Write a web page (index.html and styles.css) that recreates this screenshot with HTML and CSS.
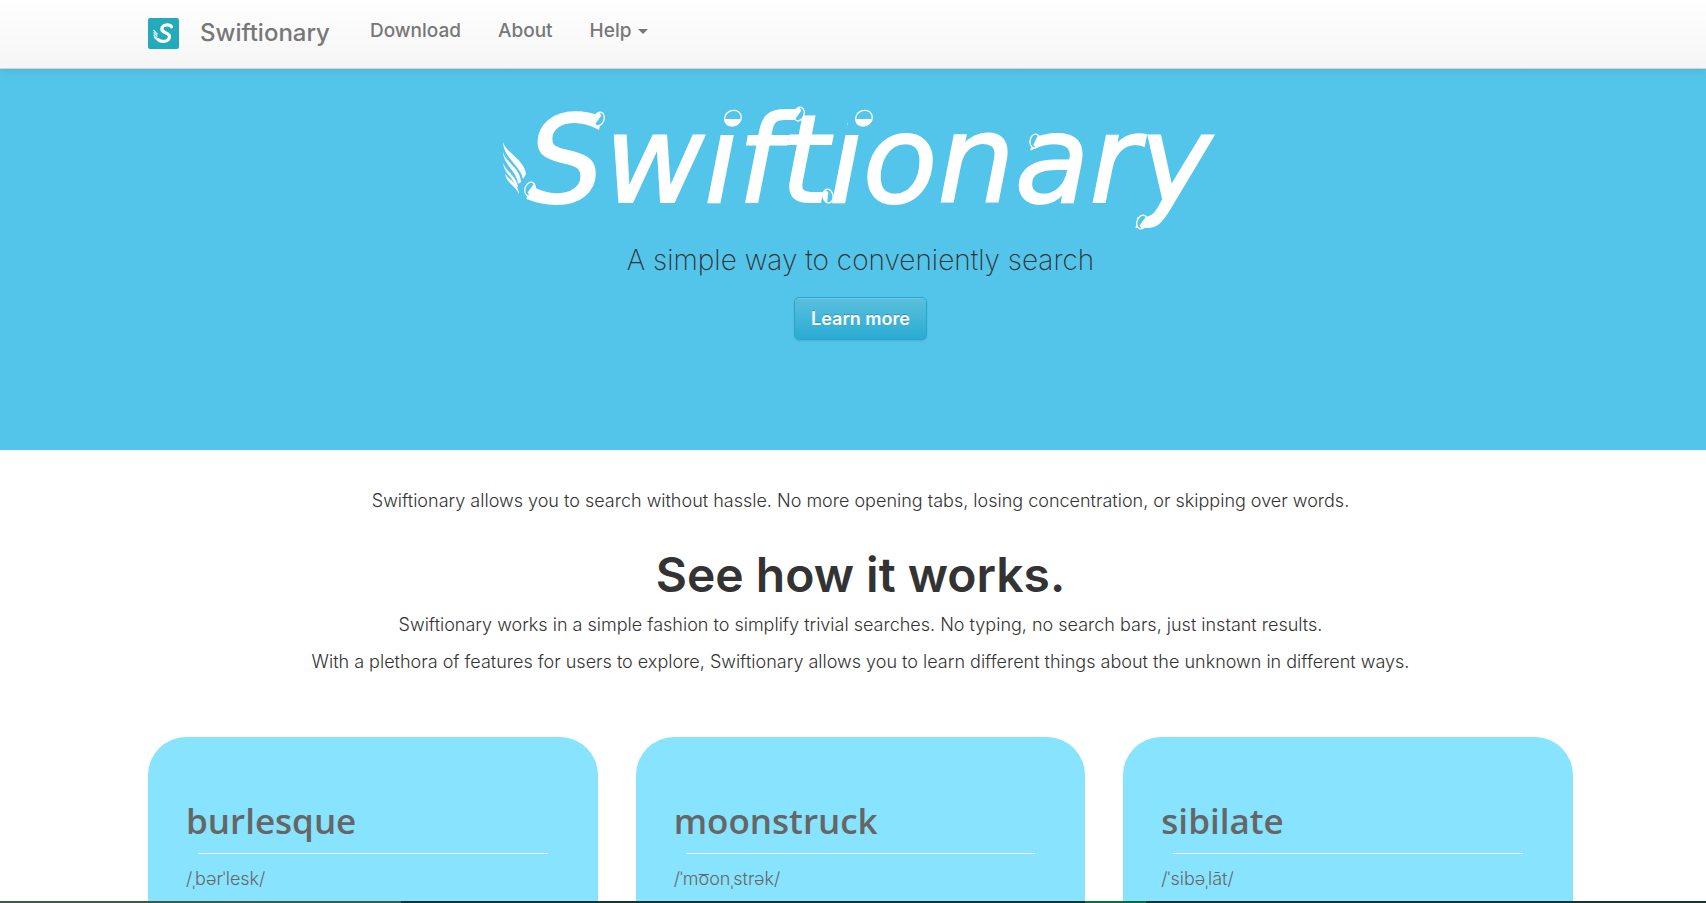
FILE: index.html
```html
<!DOCTYPE html>
<html lang="en">
<head>
<meta charset="utf-8">
<title>Swiftionary</title>
<link rel="stylesheet" href="styles.css">
</head>
<body>
<header class="navbar">
  <a class="logo" href="#" aria-label="Home">
    <svg viewBox="0 0 31 31" width="31" height="31">
      <rect width="31" height="31" rx="2" fill="#24aaba"/>
      <path d="M23.500 8.800C22 6.300 14.200 5.800 13.800 11C13.500 15.500 22 14 21.500 18.800C21 23.800 13.500 24.800 10 21.500" fill="none" stroke="#fff" stroke-width="3.200" stroke-linecap="round"/>
      <path d="M5.500 12L9.500 16.500M5.500 14.500L9.500 18.500M5.500 16.800L9 20.500M6 19L8.500 21.500" stroke="#d8f1f4" stroke-width="1.200"/>
    </svg>
  </a>
  <a class="brand" href="#">Swiftionary</a>
  <nav class="links">
    <a href="#">Download</a>
    <a href="#">About</a>
    <a href="#">Help<span class="caret"></span></a>
  </nav>
</header>
<main>
  <section class="hero">
    <h1 class="title">
      <svg class="wordmark" viewBox="0 0 720 140" width="720" height="140">
        <defs>
          <g id="drop">
            <rect x="-16" y="-14" width="32" height="24" fill="#54c5ea"/>
            <ellipse rx="8.500" ry="7.500" transform="rotate(-25)" fill="none" stroke="#fff" stroke-width="1.300"/>
            <path d="M-8.500 1H8.500C7 6.500 3 8.500-1 8.500C-6 8.500-9 5.500-8.500 1Z" fill="#fff"/>
          </g>
          <g id="cap">
            <ellipse rx="5" ry="7" fill="#54c5ea" stroke="#fff" stroke-width="1.300"/>
            <path d="M-2-6.500C-6-4-6 4-2 6.500L1-4Z" fill="#fff"/>
          </g>
        </defs>
        <text class="word" x="26" y="102">Swiftionary</text>
        <use href="#drop" x="232" y="18"/>
        <use href="#drop" x="363" y="18"/>
        <use href="#cap" transform="translate(98 19) rotate(20)"/>
        <use href="#cap" transform="translate(29 89) rotate(200)"/>
        <use href="#cap" transform="translate(298 14) rotate(20)"/>
        <use href="#cap" transform="translate(327 96) rotate(-10)"/>
        <use href="#cap" transform="translate(534 41) rotate(190)"/>
        <use href="#cap" transform="translate(641 122) rotate(200)"/>
        <g fill="#fff">
          <path d="M2 42C5 53 23 59 25 74L22 79C19 65 3 59 2 42Z"/>
          <path d="M2 52C5 63 19 67 20 82L17 84C16 71 3 66 2 52Z"/>
          <path d="M2 63C5 72 15 75 17 87L14 86C12 77 3 73 2 63Z"/>
          <path d="M4 73C7 80 17 82 18 94C14 85 5 83 4 73Z"/>
        </g>
      </svg>
    </h1>
    <p class="tagline">A simple way to conveniently search</p>
    <button class="learn" type="button">Learn more</button>
  </section>
  <section class="intro">
    <p class="lead">Swiftionary allows you to search without hassle. No more opening tabs, losing concentration, or skipping over words.</p>
    <h2>See how it works.</h2>
    <p>Swiftionary works in a simple fashion to simplify trivial searches. No typing, no search bars, just instant results.</p>
    <p>With a plethora of features for users to explore, Swiftionary allows you to learn different things about the unknown in different ways.</p>
  </section>
  <section class="cards">
    <article class="card"><h3>burlesque</h3><hr><p>/ˌbərˈlesk/</p></article>
    <article class="card"><h3>moonstruck</h3><hr><p>/ˈmo͞onˌstrək/</p></article>
    <article class="card"><h3>sibilate</h3><hr><p>/ˈsibəˌlāt/</p></article>
  </section>
</main>
<div class="strip"><i class="moss"></i><i class="pine"></i><i class="green"></i><i class="rest"></i></div>
</body>
</html>
```
FILE: styles.css
```css
* { box-sizing: border-box; }
body {
  margin: 0;
  min-height: 100vh;
  display: flex;
  flex-direction: column;
  background: #fff;
  color: #333;
  font-family: Inter, "Liberation Sans", sans-serif;
  font-size: 18px;
}
a { color: #777; text-decoration: none; }
h1, h2, h3, p { margin: 0; }
.navbar {
  position: relative;
  z-index: 1;
  display: flex;
  align-items: flex-start;
  height: 69px;
  padding: 0 133px 0 148px;
  background: linear-gradient(#fff, #f5f5f5);
  border-bottom: 1px solid #d4d4d4;
  box-shadow: 0 1px 10px rgba(0, 0, 0, 0.1);
}
.logo { margin: 18px 21px 0 0; line-height: 0; }
.brand { font-size: 24px; font-weight: 500; line-height: 30px; margin-top: 18px; }
.links { display: flex; gap: 37px; margin: 20px 0 0 40px; font-size: 19px; font-weight: 500; line-height: 22px; }
.caret {
  display: inline-block;
  margin-left: 7px;
  vertical-align: middle;
  border-top: 5px solid #777;
  border-left: 5px solid transparent;
  border-right: 5px solid transparent;
}
main { flex: 1; display: flex; flex-direction: column; }
.hero {
  display: flex;
  flex-direction: column;
  align-items: center;
  padding: 31px 133px 110px 148px;
  background: #54c5ea;
}
.title { line-height: 0; }
.wordmark { overflow: visible; }
.word {
  font: italic 400 122px "DejaVu Sans", sans-serif;
  fill: #fff;
  stroke: #fff;
  stroke-width: 2px;
}
.tagline { font-size: 28px; font-weight: 200; line-height: 40px; }
.learn {
  margin-top: 17px;
  padding: 0 16px;
  height: 43px;
  border: 1px solid #29a6cb;
  border-radius: 5px;
  background: linear-gradient(#5bc0de, #2aabd2);
  box-shadow: inset 0 1px 0 rgba(255, 255, 255, 0.15), 0 1px 2px rgba(0, 0, 0, 0.12);
  color: #fff;
  font: 600 18px Inter, sans-serif;
  text-shadow: 0 -1px 0 rgba(0, 0, 0, 0.2);
}
.intro { padding: 37px 133px 0 148px; text-align: center; font-weight: 300; line-height: 27px; }
.intro p { margin-bottom: 10px; }
.intro h2 { margin: 36px 0 11px; font-size: 48px; font-weight: 600; line-height: 50px; }
.cards {
  flex: 1;
  display: grid;
  grid-template-columns: repeat(3, 1fr);
  gap: 38px;
  padding: 52px 133px 0 148px;
}
.card {
  padding: 58px 38px 8px;
  border-radius: 38px 38px 0 0;
  background: #88e4fe;
  color: #666;
}
.card h3 { font: 600 35px/52px "Open Sans", sans-serif; }
.card hr { margin: 6px 12px 12px; border: 0; border-top: 1px solid #eee; }
.card p { font-weight: 300; line-height: 26px; }
.strip { display: flex; height: 2px; }
.moss { flex: 401; background: #3d5a4c; }
.pine { flex: 684; background: #15362f; }
.green { flex: 61; background: #0b6a40; }
.rest { flex: 560; background: #15362f; }
```
